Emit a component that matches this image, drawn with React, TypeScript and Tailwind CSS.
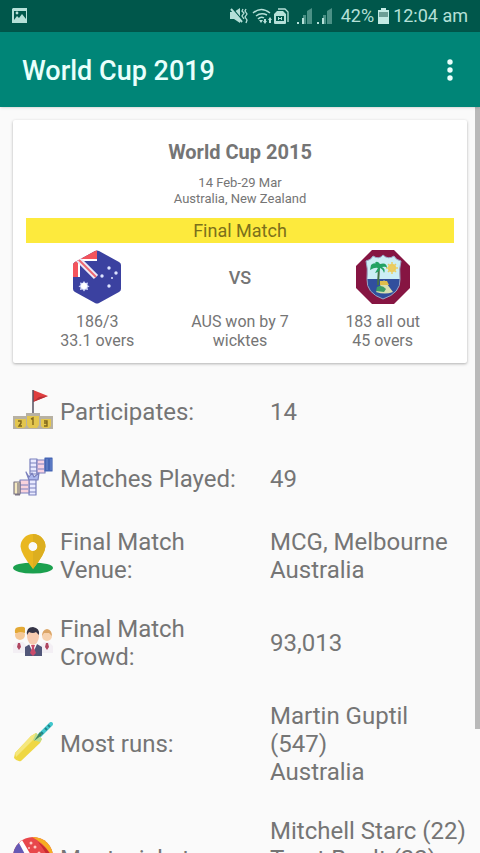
import type { ReactNode } from "react";

function PictureIcon() {
  return (
    <svg className="h-4 w-4" viewBox="0 0 16 16" aria-hidden="true">
      <path fill="#b5e0d8" fillRule="evenodd" d="M1 0h14v15H0V1zM2 3v9l3-4 2 2 3-4 4 5V3z" />
      <circle cx="5" cy="5" r="1.4" fill="#b5e0d8" />
    </svg>
  );
}

function MuteIcon() {
  return (
    <svg className="h-4 w-[18px]" viewBox="0 0 18 16" aria-hidden="true">
      <path fill="#b5e0d8" d="M0 4h4l6-4v15l-6-4H0z" />
      <path fill="none" stroke="#00574b" strokeWidth="1.2" d="M3 1l10 12" />
      <path fill="none" stroke="#b5e0d8" strokeWidth="2" d="M1 1l11 13" />
      <path fill="none" stroke="#b5e0d8" strokeWidth="1.3" d="M13 1l-1 2 2 2-2 3 2 3M16 1l-1 2 2 3-2 3 2 3-1 3" />
    </svg>
  );
}

function WifiIcon() {
  return (
    <svg className="h-4 w-[22px]" viewBox="0 0 22 16" aria-hidden="true">
      <g fill="none" stroke="#b5e0d8" strokeWidth="1.5">
        <path d="M1 5Q9-2 18 5M4 8q5-4 11-1M6 11q3-3 6-1" />
      </g>
      <path fill="#b5e0d8" d="M7 12h4l-2 3zM12 11h2v2h1l-2 3-2-3h1zM18 9l2 3h-1v3h-2v-3h-1z" />
    </svg>
  );
}

function SimIcon() {
  return (
    <svg className="h-4 w-[15px]" viewBox="0 0 15 16" aria-hidden="true">
      <path fill="none" stroke="#b5e0d8" strokeWidth="1.3" d="M4 1h7l3 3v10" />
      <path fill="#b5e0d8" fillRule="evenodd" d="M3 3h6l3 3v9q0 1-1 1H1q-1 0-1-1V6zM2 8v5h8V8z" />
      <path stroke="#b5e0d8" d="M4.500 9v3M7.500 9v3M4 10.500h4" />
    </svg>
  );
}

function SignalIcon() {
  return (
    <svg className="h-4 w-4" viewBox="0 0 16 16" aria-hidden="true">
      <path fill="#4b9186" d="M6 7h3v9H6zM10 3l5-3v16h-5z" />
      <path fill="#b5e0d8" d="M0 14h2v2H0zM5 10h2v6H5z" />
    </svg>
  );
}

function BatteryIcon() {
  return (
    <svg className="h-4 w-[11px]" viewBox="0 0 11 16" aria-hidden="true">
      <path fill="#6b9f96" d="M3 0h5v2h3v8H0V2h3z" />
      <path fill="#c2ebe4" d="M3 0h5v2h3v14H0V2h3zM1 4v5h9V4z" fillRule="evenodd" />
    </svg>
  );
}

function AustraliaFlag() {
  return (
    <svg className="size-[54px]" viewBox="0 0 54 54" role="img" aria-label="Australia">
      <defs>
        <clipPath id="hex">
          <path d="M25 1q2-1 4 0l20 11q2 1 2 3v24q0 2-2 3L29 53q-2 1-4 0L5 42q-2-1-2-3V15q0-2 2-3z" />
        </clipPath>
      </defs>
      <g clipPath="url(#hex)">
        <path fill="#3b41a0" d="M0 0h54v54H0z" />
        <path fill="#f3545c" d="M0 0h27v9H9v18H0z" />
        <path stroke="#fff" strokeWidth="2" d="M9 27V10h18" fill="none" />
        <path stroke="#eceaf8" strokeWidth="6" d="M8 9l18 18" />
        <path stroke="#ee6670" strokeWidth="2" d="M6 7l20 20" />
      </g>
      <g fill="#dfe5ff">
        <path fill="#cfd6fa" d="M14 31l1.500 2 2.500-.5-.5 2.500 2 1.500-2 1 .5 2.500-2.500-.5-1.500 2-1.500-2-2.500.5.5-2.500-2-1 2-1.500-.5-2.500 2.500.5z" />
        <circle cx="14" cy="36" r="3" fill="#fff" />
        <circle cx="39" cy="18" r="1.700" />
        <circle cx="32" cy="26" r="1.700" />
        <circle cx="46" cy="23" r="1.700" />
        <circle cx="42" cy="28" r="1" />
        <circle cx="39" cy="36" r="1.700" />
      </g>
    </svg>
  );
}

function WestIndiesFlag() {
  return (
    <svg className="size-[54px]" viewBox="0 0 54 54" role="img" aria-label="West Indies">
      <path fill="#861542" d="M16 0h22l16 16v22L38 54H16L0 38V16z" />
      <path fill="#cceef5" d="M10 11q5-1 7-5 6 4 10-1 5 5 11 1 2 4 7 5-2 7-1 18H11q1-11-1-18z" />
      <path fill="#314f9d" d="M11 29h33q1 14-17 20Q10 43 11 29z" />
      <path fill="none" stroke="#9aa5c5" d="M10 11q5-1 7-5 6 4 10-1 5 5 11 1 2 4 7 5-2 7-1 18 1 14-17 20Q10 43 11 29q1-11-1-18z" />
      <circle cx="36" cy="18" r="4" fill="#f2c84b" />
      <path stroke="#e9ce65" strokeWidth="1.500" d="M36 12v12M30 18h12M32 14l8 8M40 14l-8 8" />
      <path stroke="#477145" strokeWidth="2" d="M23 17l-1 18" />
      <path fill="#22a263" d="M22 16q-3-5-7-1l-1 5q5-3 8-2l-3 5q5-1 5-5 3 1 4 5 2-4-2-6 4-1 5 1 0-6-7-4-3-4-5-1z" />
      <path fill="#d8dfb0" d="M20 42l8-12 9 12q-8 3-17 0z" />
      <path fill="#dfbc4b" d="M24 31h7l2 4h-9z" />
      <path fill="#3c9d67" d="M21 37q5-3 9 2l-2 3-8-1z" />
    </svg>
  );
}

function PodiumIcon() {
  return (
    <svg className="size-10" viewBox="0 0 40 40" aria-hidden="true">
      <path fill="#df3e40" d="M20 0l15 6-15 6z" />
      <path fill="#b62e36" d="M20 12l15-6-9 1z" />
      <path stroke="#555060" strokeWidth="1.500" d="M20 0v24" />
      <path fill="#b7b1a3" d="M13 23h14v16H13zM0 26h13v13H0zM27 26h13v13H27z" />
      <path fill="#e3c64e" d="M14 26h12v9l-2 3h-8l-2-3zM2 29h11v7l-2 2H4l-2-2zM28 29h10v7l-2 2h-6l-2-2z" />
      <path fill="none" stroke="#80671d" strokeWidth="1.400" d="M18 29l2-1v7M5 31h3v2l-2 3h3M31 31h3v5h-3M31 33h3" />
    </svg>
  );
}

function HandsIcon() {
  return (
    <svg className="size-10" viewBox="0 0 40 40" aria-hidden="true">
      <g stroke="#7a80bd" strokeWidth="1.200" strokeLinejoin="round">
        <path fill="#e9eaff" d="M17 2h7v15h-7zM17 6h7M17 10h7M17 14h7" />
        <path fill="#f8d3e4" d="M24 3h8v13h-8zM25 7h6M25 12h6" />
        <path fill="#4666b5" stroke="#4666b5" d="M32 1h7v13h-7z" />
        <path fill="#acb7ed" d="M13 15l3 5 3-4 2 4 5-4-1 7h-9z" />
        <path fill="#e9eaff" d="M16 23h7v15h-7zM16 27h7M16 31h7M16 35h7" />
        <path fill="#f9d3dc" d="M7 23h9v13H7zM7 28h8M7 32h8" />
        <path fill="#f5e9bf" stroke="#7b7484" d="M1 25h6v12H1zM2 38h5M5 26v11" />
      </g>
      <path stroke="#6f8bd0" strokeWidth="1" d="M34 2v11M38 2v11" />
    </svg>
  );
}

function VenueIcon() {
  return (
    <svg className="size-10" viewBox="0 0 40 40" aria-hidden="true">
      <ellipse cx="20" cy="34" rx="20" ry="5.500" fill="#1ba04e" />
      <path fill="#e9b71f" fillRule="evenodd" d="M20 0a12.500 12.500 0 0 1 12.500 12.500Q32 20 20 35 8 20 7.500 12.500A12.500 12.500 0 0 1 20 0zm0 8a4.500 4.500 0 1 0 0 9 4.500 4.500 0 0 0 0-9z" />
      <path fill="#dcae1f" d="M20 0a12.500 12.500 0 0 1 12.500 12.500Q32 20 20 35V17a4.500 4.500 0 0 0 0-9z" />
    </svg>
  );
}

function CrowdIcon() {
  return (
    <svg className="size-10" viewBox="0 0 40 40" aria-hidden="true">
      <path fill="#f3eff4" d="M0 32v-8l4-3h6l4 4v7zM27 32v-7l4-4h5l4 4v7z" />
      <circle cx="7" cy="14" r="5" fill="#f5c998" />
      <path fill="#e3a935" d="M2 12q-1-6 4-6 5-1 6 1v5q-5-2-8 0z" />
      <circle cx="34" cy="15" r="5" fill="#f7d2ae" />
      <path fill="#dba566" d="M29 15q0-6 5-7 5 1 5 7l-3-3h-5z" />
      <path fill="#b04761" d="M5 22h2l1 4-2 3-2-3zM33 22h2l1 4-2 3-2-3z" />
      <path fill="#525779" d="M12 35v-9l5-3h7l5 3v9z" />
      <path fill="#fff" d="M16 23h8l-4 9z" />
      <path fill="#cb4b6b" d="M18 24h4l-1 3 2 5-3 3-3-3 2-5z" />
      <path fill="#f7cbb0" d="M14 12q0-4 6-4t6 4v4q-1 7-6 8-5-1-6-8z" />
      <path fill="#353446" d="M14 14q-1-8 6-8 7 1 6 8l-3-3q-3 2-7 0z" />
    </svg>
  );
}

function BatIcon() {
  return (
    <svg className="size-10" viewBox="0 0 40 40" aria-hidden="true">
      <path stroke="#42c7cd" strokeWidth="4" strokeLinecap="round" d="M25 15L38 2" />
      <path stroke="#20858c" strokeWidth="2" d="M32 6l2 2M35 3l2 2M28 10l2 2" />
      <path fill="#efd743" d="M18 14l5-3 6 6-2 4L8 39q-4 1-7-3l1-5z" />
      <path fill="#f5e77d" d="M18 14l5-3 2 2L3 35l-1-4z" />
      <path fill="#b9dc91" d="M23 11l6 6-2 3-7-2z" />
      <path fill="#3d8560" d="M21 19l6-9 2 3z" />
    </svg>
  );
}

function BallIcon() {
  return (
    <svg className="size-10" viewBox="0 0 40 40" aria-hidden="true">
      <defs>
        <clipPath id="ball"><circle cx="20" cy="20" r="20" /></clipPath>
      </defs>
      <g clipPath="url(#ball)">
        <path fill="#e8474b" d="M0 0h40v40H0z" />
        <path fill="#f6ad22" d="M19 0h21v22Q34 8 19 0z" />
        <path fill="#c92a2f" d="M25 5q10 6 15 18v17q-2-20-15-35z" />
        <path fill="#fff" d="M9 3l22 37H18L4 8z" />
        <path fill="#6659b5" d="M6 6l18 34H0V6z" />
        <g fill="#ffc9c4">
          <circle cx="18" cy="6" r="1.500" />
          <circle cx="22" cy="10" r="1.500" />
          <circle cx="16" cy="11" r="1" />
          <circle cx="26" cy="16" r="1.500" />
        </g>
      </g>
    </svg>
  );
}

type Stat = { icon: ReactNode; label: string[]; value: string[] };

const stats: Stat[] = [
  { icon: <PodiumIcon />, label: ["Participates:"], value: ["14"] },
  { icon: <HandsIcon />, label: ["Matches Played:"], value: ["49"] },
  { icon: <VenueIcon />, label: ["Final Match", "Venue:"], value: ["MCG, Melbourne", "Australia"] },
  { icon: <CrowdIcon />, label: ["Final Match", "Crowd:"], value: ["93,013"] },
  { icon: <BatIcon />, label: ["Most runs:"], value: ["Martin Guptil", "(547)", "Australia"] },
];

function Lines({ items }: { items: string[] }) {
  return (
    <>
      {items.map((line) => (
        <span key={line} className="block whitespace-nowrap">{line}</span>
      ))}
    </>
  );
}

const rowClass = "grid min-h-9 shrink-0 grid-cols-[47px_1fr_197px] items-center";
const iconClass = "-mt-1 mb-0";

export default function App() {
  return (
    <div className="flex h-screen flex-col overflow-hidden bg-[#fafafa] font-[Roboto,sans-serif] text-[#757575]">
      <div className="flex h-8 shrink-0 items-center justify-between bg-[#00574b] px-3 text-lg text-[#b5e0d8]">
        <PictureIcon />
        <div className="flex items-center gap-1">
          <MuteIcon />
          <div className="flex items-center">
            <WifiIcon />
            <SimIcon />
          </div>
          <div className="mr-1 ml-1 flex items-center gap-1">
            <SignalIcon />
            <SignalIcon />
          </div>
          <div className="flex items-center gap-1">
            <span>42%</span>
            <BatteryIcon />
          </div>
          <span>12:04 am</span>
        </div>
      </div>
      <header className="z-10 flex h-[75px] shrink-0 items-center justify-between bg-[#008577] pr-4 pl-[22px] shadow-sm">
        <h1 className="pt-1 text-[27px] font-medium text-[#e9fffc]">World Cup 2019</h1>
        <button type="button" aria-label="More options" className="flex h-10 w-7 items-center justify-center">
          <svg className="h-6 w-6" viewBox="0 0 24 24" fill="#e9fffc" aria-hidden="true">
            <circle cx="12" cy="4" r="2.700" />
            <circle cx="12" cy="12" r="2.700" />
            <circle cx="12" cy="20" r="2.700" />
          </svg>
        </button>
      </header>
      <main className="relative flex min-h-0 flex-1 flex-col overflow-hidden px-[13px] pt-[13px]">
        <section className="shrink-0 rounded-xs bg-white px-[13px] pt-5 pb-[13px] text-center shadow-[0_1px_3px_rgba(0,0,0,0.3)]">
          <h2 className="text-[20px] leading-6 font-bold">World Cup 2015</h2>
          <p className="mt-[11px] text-[13px] leading-4">14 Feb-29 Mar<br />Australia, New Zealand</p>
          <p className="mt-[11px] bg-[#fdea3d] text-[18px] leading-[25px] text-[#7b701b]">Final Match</p>
          <div className="mt-[7px] grid grid-cols-3 items-center justify-items-center">
            <AustraliaFlag />
            <span className="text-[18px] font-medium">VS</span>
            <WestIndiesFlag />
          </div>
          <div className="mt-2 grid grid-cols-3 text-[16px] leading-[19px]">
            <p>186/3<br />33.1 overs</p>
            <p>AUS won by 7<br />wicktes</p>
            <p>183 all out<br />45 overs</p>
          </div>
        </section>
        <dl className="mt-[31px] flex flex-col gap-[31px] text-[24px] leading-7">
          {stats.map((stat) => (
            <div key={stat.label.join(" ")} className={rowClass}>
              <div className={iconClass}>{stat.icon}</div>
              <dt><Lines items={stat.label} /></dt>
              <dd><Lines items={stat.value} /></dd>
            </div>
          ))}
          <div className={rowClass + " h-[84px]"}>
            <div className={iconClass}><BallIcon /></div>
            <dt>Most wickets:</dt>
            <dd className="self-start"><Lines items={["Mitchell Starc (22)", "Trent Boult (22)"]} /></dd>
          </div>
        </dl>
        <div className="absolute top-0 right-0 h-5/6 w-[5px] bg-[#b9b9b9]" />
      </main>
    </div>
  );
}
